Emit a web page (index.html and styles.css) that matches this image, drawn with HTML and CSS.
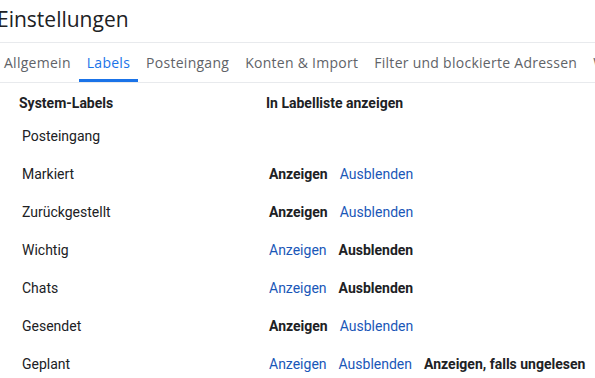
FILE: index.html
```html
<!DOCTYPE html>
<html lang="de">
<head>
<meta charset="utf-8">
<title>Einstellungen</title>
<link rel="stylesheet" href="styles.css">
</head>
<body>
<h1 class="title">Einstellungen</h1>
<nav class="tabs">
  <a class="tab">Allgemein</a>
  <a class="tab active">Labels</a>
  <a class="tab">Posteingang</a>
  <a class="tab">Konten &amp; Import</a>
  <a class="tab">Filter und blockierte Adressen</a>
  <a class="tab">Weiterleitung und POP/IMAP</a>
</nav>
<div class="labels">
  <div class="head">System-Labels</div>
  <div class="head">In Labelliste anzeigen</div>

  <div class="name">Posteingang</div>
  <div class="acts"></div>

  <div class="name">Markiert</div>
  <div class="acts"><b>Anzeigen</b><a>Ausblenden</a></div>

  <div class="name">Zurückgestellt</div>
  <div class="acts"><b>Anzeigen</b><a>Ausblenden</a></div>

  <div class="name">Wichtig</div>
  <div class="acts"><a>Anzeigen</a><b>Ausblenden</b></div>

  <div class="name">Chats</div>
  <div class="acts"><a>Anzeigen</a><b>Ausblenden</b></div>

  <div class="name">Gesendet</div>
  <div class="acts"><b>Anzeigen</b><a>Ausblenden</a></div>

  <div class="name">Geplant</div>
  <div class="acts"><a>Anzeigen</a><a>Ausblenden</a><b>Anzeigen, falls ungelesen</b></div>
</div>
</body>
</html>
```
FILE: styles.css
```css
html, body {
  margin: 0;
  padding: 0;
  background: #fff;
  overflow: hidden;
}
body {
  width: 595px;
  height: 378px;
  font-family: Roboto, "Liberation Sans", Arial, sans-serif;
  font-size: 14px;
  color: #202124;
}
.title {
  margin: 0 0 0 -3px;
  height: 43px;
  box-sizing: border-box;
  line-height: 38px;
  font-family: "Open Sans", Roboto, sans-serif;
  font-weight: 400;
  font-size: 21px;
  color: #202124;
  border-bottom: 1px solid #e8eaed;
}
.tabs {
  display: flex;
  white-space: nowrap;
  height: 40px;
  box-sizing: border-box;
  border-bottom: 1px solid #e8eaed;
  margin-left: -4px;
  overflow: hidden;
}
.tab {
  flex: none;
  padding: 0 8px;
  height: 36px;
  line-height: 39px;
  font-family: "Open Sans", Roboto, sans-serif;
  font-size: 14px;
  font-weight: 500;
  letter-spacing: 0.27px;
  color: #5f6368;
  border-bottom: 3px solid transparent;
}
.tab.active {
  color: #1a73e8;
  border-bottom-color: #1a73e8;
}
.labels {
  display: grid;
  grid-template-columns: 247px 1fr;
  grid-template-rows: 27px;
  grid-auto-rows: 38px;
  padding: 7px 0 0 19px;
}
.head {
  font-weight: 700;
  line-height: 26px;
  height: 26px;
  color: #202124;
}
.name {
  padding-left: 3px;
  line-height: 38px;
}
.acts {
  padding-left: 3px;
  line-height: 38px;
  display: flex;
  gap: 12px;
  white-space: nowrap;
}
.acts b {
  font-weight: 700;
  color: #202124;
}
.acts a {
  color: #1a57b8;
}
```
